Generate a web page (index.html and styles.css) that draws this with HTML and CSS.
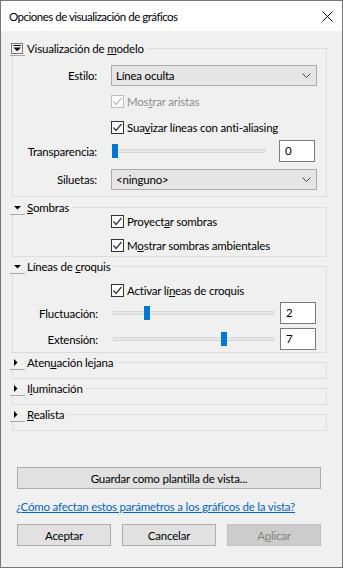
FILE: index.html
```html
<!DOCTYPE html>
<html lang="es">
<head>
    <meta charset="UTF-8">
    <meta name="viewport" content="width=device-width, initial-scale=1.0">
    <title>Opciones de visualización de gráficos</title>
    <link rel="stylesheet" href="styles.css">
</head>
<body>
    <div class="dialog">
        <div class="titlebar">
            <span class="title">Opciones de visualización de gráficos</span>
            <svg class="close" width="11" height="11" viewBox="0 0 11 11">
                <path d="M0.5 0.5L10.5 10.5M10.5 0.5L0.5 10.5" stroke="#000" stroke-width="1"/>
            </svg>
        </div>

        <div class="content">
            <fieldset class="group model">
                <legend>
                    <span class="toggle">
                        <svg width="15" height="14" viewBox="0 0 15 14">
                            <rect x="1.5" y="2.5" width="11" height="10" fill="none" stroke="#000" stroke-dasharray="1 1"/>
                            <path d="M3.5 4.5H10.5" stroke="#000"/>
                            <path d="M3.5 6.5H11L7.2 10.2Z" fill="#000"/>
                        </svg>
                    </span>
                    <span>Visualización de <u>m</u>odelo</span>
                </legend>

                <div class="row style-row">
                    <span class="lbl">Estilo:</span>
                    <div class="select">
                        <span>Línea oculta</span>
                        <svg width="9" height="5" viewBox="0 0 9 5"><path d="M0.5 0.5L4.5 4.5L8.5 0.5" fill="none" stroke="#444"/></svg>
                    </div>
                </div>

                <div class="check-row edges disabled">
                    <span class="box"><svg width="11" height="11" viewBox="0 0 11 11"><path d="M1.5 5.5L4 8.5L9.5 2" fill="none" stroke="#bcbcbc" stroke-width="1.2"/></svg></span>
                    <span>Mos<u>t</u>rar aristas</span>
                </div>

                <div class="check-row smooth">
                    <span class="box"><svg width="11" height="11" viewBox="0 0 11 11"><path d="M1.5 5.5L4 8.5L9.5 2" fill="none" stroke="#333" stroke-width="1.2"/></svg></span>
                    <span>Sua<u>v</u>izar líneas con anti-aliasing</span>
                </div>

                <div class="row slider-row transparency">
                    <span class="lbl">Transparencia:</span>
                    <div class="slider short">
                        <div class="track"></div>
                        <div class="thumb" style="left: 0px;"></div>
                    </div>
                    <div class="num">0</div>
                </div>

                <div class="row outline-row">
                    <span class="lbl">Siluetas:</span>
                    <div class="select">
                        <span>&lt;ninguno&gt;</span>
                        <svg width="9" height="5" viewBox="0 0 9 5"><path d="M0.5 0.5L4.5 4.5L8.5 0.5" fill="none" stroke="#444"/></svg>
                    </div>
                </div>
            </fieldset>

            <fieldset class="group shadows">
                <legend>
                    <span class="toggle">
                        <svg width="15" height="14" viewBox="0 0 15 14"><path d="M4 6H11L7.5 9.5Z" fill="#000"/></svg>
                    </span>
                    <span><u>S</u>ombras</span>
                </legend>

                <div class="check-row cast">
                    <span class="box"><svg width="11" height="11" viewBox="0 0 11 11"><path d="M1.5 5.5L4 8.5L9.5 2" fill="none" stroke="#333" stroke-width="1.2"/></svg></span>
                    <span>Proyect<u>a</u>r sombras</span>
                </div>

                <div class="check-row ambient">
                    <span class="box"><svg width="11" height="11" viewBox="0 0 11 11"><path d="M1.5 5.5L4 8.5L9.5 2" fill="none" stroke="#333" stroke-width="1.2"/></svg></span>
                    <span>M<u>o</u>strar sombras ambientales</span>
                </div>
            </fieldset>

            <fieldset class="group sketch">
                <legend>
                    <span class="toggle">
                        <svg width="15" height="14" viewBox="0 0 15 14"><path d="M4 6H11L7.5 9.5Z" fill="#000"/></svg>
                    </span>
                    <span>Líneas de <u>c</u>roquis</span>
                </legend>

                <div class="check-row enable">
                    <span class="box"><svg width="11" height="11" viewBox="0 0 11 11"><path d="M1.5 5.5L4 8.5L9.5 2" fill="none" stroke="#333" stroke-width="1.2"/></svg></span>
                    <span>Activar lí<u>n</u>eas de croquis</span>
                </div>

                <div class="row slider-row jitter">
                    <span class="lbl wide">Fluctuación:</span>
                    <div class="slider long">
                        <div class="track"></div>
                        <div class="thumb" style="left: 31px;"></div>
                    </div>
                    <div class="num">2</div>
                </div>

                <div class="row slider-row extension">
                    <span class="lbl wide">Extensión:</span>
                    <div class="slider long">
                        <div class="track"></div>
                        <div class="thumb" style="left: 108px;"></div>
                    </div>
                    <div class="num">7</div>
                </div>
            </fieldset>

            <fieldset class="group collapsed">
                <legend>
                    <span class="toggle">
                        <svg width="15" height="14" viewBox="0 0 15 14"><path d="M4 4V11L7.5 7.5Z" fill="#000"/></svg>
                    </span>
                    <span>Aten<u>u</u>ación lejana</span>
                </legend>
            </fieldset>

            <fieldset class="group collapsed">
                <legend>
                    <span class="toggle">
                        <svg width="15" height="14" viewBox="0 0 15 14"><path d="M4 4V11L7.5 7.5Z" fill="#000"/></svg>
                    </span>
                    <span>I<u>l</u>uminación</span>
                </legend>
            </fieldset>

            <fieldset class="group collapsed">
                <legend>
                    <span class="toggle">
                        <svg width="15" height="14" viewBox="0 0 15 14"><path d="M4 4V11L7.5 7.5Z" fill="#000"/></svg>
                    </span>
                    <span><u>R</u>ealista</span>
                </legend>
            </fieldset>

            <button class="btn template">Guardar como plantilla de vista...</button>

            <a class="help" href="#">¿Cómo afectan estos parámetros a los gráficos de la vista?</a>

            <div class="actions">
                <button class="btn">Aceptar</button>
                <button class="btn">Cancelar</button>
                <button class="btn" disabled>A<u>p</u>licar</button>
            </div>
        </div>
    </div>
</body>
</html>
```

FILE: styles.css
```css
* {
    margin: 0;
    padding: 0;
    box-sizing: border-box;
}

body {
    font-family: 'Lato', sans-serif;
    font-size: 11.5px;
    letter-spacing: -0.2px;
    color: #000;
    background: #fff;
}

.dialog {
    width: 343px;
    height: 568px;
    border: 1px solid #777;
    background: #f0f0f0;
    display: flex;
    flex-direction: column;
}

.titlebar {
    height: 30px;
    background: #fff;
    display: flex;
    align-items: center;
    justify-content: space-between;
    padding: 0 9px 0 8px;
}

.title {
    font-size: 11.5px;
    letter-spacing: -0.5px;
}

.content {
    display: flex;
    flex-direction: column;
    padding-top: 10px;
}

/* group boxes */

.group {
    width: 315px;
    margin: 0 0 0 11px;
    border: 1px solid #dcdcdc;
    padding: 0 9px 0 0;
    min-width: 0;
    display: flex;
    flex-direction: column;
}

.group legend {
    display: flex;
    align-items: center;
    height: 15px;
    margin-left: -3px;
    padding-right: 3px;
    line-height: 15px;
}

.toggle {
    display: block;
    width: 15px;
    height: 15px;
    border-bottom: 1px solid #a8a8a8;
    margin-right: 2px;
}

.toggle svg {
    display: block;
}

.model { padding-bottom: 6px; }
.shadows { margin-top: 3px; padding-bottom: 4px; }
.sketch { margin-top: 2px; padding-bottom: 2px; }
.collapsed { margin-top: 2px; padding-bottom: 8px; }

/* rows */

.row {
    display: flex;
    align-items: center;
    height: 21px;
}

.lbl {
    width: 84px;
    margin-right: 14px;
    text-align: right;
    flex-shrink: 0;
}

.lbl.wide {
    width: 85px;
    margin-right: 14px;
}

.style-row { margin-top: 9px; }
.transparency { margin-top: 6px; height: 22px; }
.outline-row { margin-top: 7px; }
.jitter { margin-top: 5px; height: 22px; }
.extension { margin-top: 4px; height: 22px; }

.select {
    width: 206px;
    height: 21px;
    background: #e5e5e5;
    border: 1px solid #acacac;
    display: flex;
    align-items: center;
    justify-content: space-between;
    padding: 0 5px 0 4px;
}

.select svg {
    display: block;
}

/* checkboxes */

.check-row {
    display: flex;
    align-items: center;
    height: 13px;
    padding-left: 98px;
}

.check-row .box {
    width: 13px;
    height: 13px;
    border: 1px solid #333;
    background: #fff;
    margin-right: 3px;
    flex-shrink: 0;
}

.check-row .box svg {
    display: block;
}

.check-row.disabled {
    color: #8d8d8d;
}

.check-row.disabled .box {
    border-color: #bcbcbc;
}

.edges { margin-top: 9px; }
.smooth { margin-top: 13px; }
.cast { margin-top: 0; }
.ambient { margin-top: 11px; }
.enable { margin-top: 10px; }

/* sliders */

.slider {
    position: relative;
    height: 22px;
    display: flex;
    align-items: center;
    margin-left: 1px;
}

.slider.short {
    width: 153px;
    margin-right: 14px;
}

.slider.long {
    width: 161px;
    margin-right: 6px;
}

.track {
    width: 100%;
    height: 4px;
    background: #e7e7e7;
    border: 1px solid #d6d6d6;
}

.thumb {
    position: absolute;
    top: 4px;
    width: 6px;
    height: 14px;
    background: #0078d7;
}

.num {
    width: 36px;
    height: 22px;
    background: #fff;
    border: 1px solid #7a7a7a;
    padding-left: 5px;
    line-height: 20px;
}

/* buttons */

.btn {
    font-family: 'Lato', sans-serif;
    font-size: 11.5px;
    letter-spacing: -0.2px;
    color: #000;
    background: #e1e1e1;
    border: 1px solid #adadad;
    height: 22px;
}

.btn[disabled] {
    background: #cccccc;
    border-color: #bfbfbf;
    color: #838383;
}

.template {
    width: 304px;
    margin: 36px 0 0 16px;
}

.help {
    display: block;
    margin: 10px 0 0 15px;
    line-height: 15px;
    color: #0066cc;
}

.actions {
    display: flex;
    gap: 11px;
    margin: 10px 0 0 16px;
}

.actions .btn {
    width: 94px;
}
```
